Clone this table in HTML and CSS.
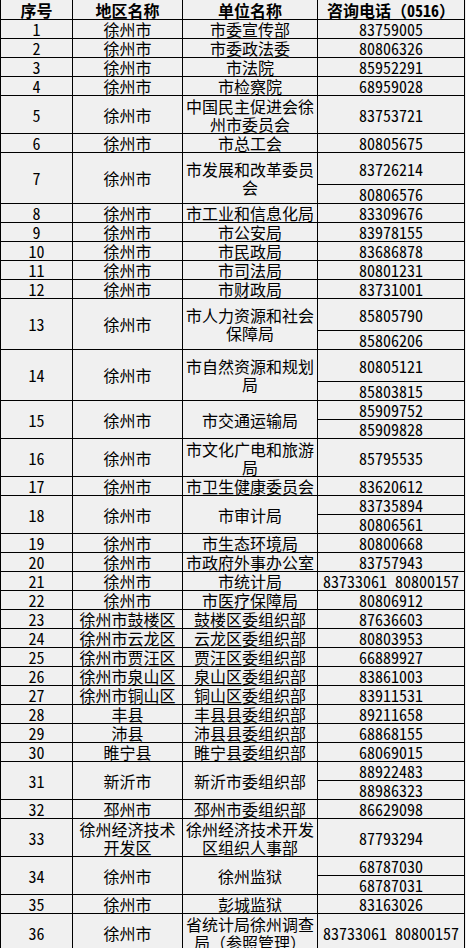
FILE: index.html
```html
<!DOCTYPE html>
<html lang="zh-CN">
<head>
<meta charset="utf-8">
<title>咨询电话</title>
<link rel="stylesheet" href="styles.css">
</head>
<body>
<table class="sheet">
  <colgroup>
    <col class="c-no"><col class="c-area"><col class="c-unit"><col class="c-tel">
  </colgroup>
  <thead>
    <tr class="h20"><th>序号</th><th>地区名称</th><th>单位名称</th><th>咨询电话（0516）</th></tr>
  </thead>
  <tbody>
    <tr class="h19"><td>1</td><td>徐州市</td><td>市委宣传部</td><td>83759005</td></tr>
    <tr class="h19"><td>2</td><td>徐州市</td><td>市委政法委</td><td>80806326</td></tr>
    <tr class="h19"><td>3</td><td>徐州市</td><td>市法院</td><td>85952291</td></tr>
    <tr class="h19"><td>4</td><td>徐州市</td><td>市检察院</td><td>68959028</td></tr>
    <tr class="h38"><td>5</td><td>徐州市</td><td>中国民主促进会徐州市委员会</td><td>83753721</td></tr>
    <tr class="h19"><td>6</td><td>徐州市</td><td>市总工会</td><td>80805675</td></tr>
    <tr class="h32"><td rowspan="2">7</td><td rowspan="2">徐州市</td><td rowspan="2">市发展和改革委员会</td><td>83726214</td></tr>
    <tr class="h19"><td>80806576</td></tr>
    <tr class="h19"><td>8</td><td>徐州市</td><td>市工业和信息化局</td><td>83309676</td></tr>
    <tr class="h19"><td>9</td><td>徐州市</td><td>市公安局</td><td>83978155</td></tr>
    <tr class="h19"><td>10</td><td>徐州市</td><td>市民政局</td><td>83686878</td></tr>
    <tr class="h19"><td>11</td><td>徐州市</td><td>市司法局</td><td>80801231</td></tr>
    <tr class="h19"><td>12</td><td>徐州市</td><td>市财政局</td><td>83731001</td></tr>
    <tr class="h32"><td rowspan="2">13</td><td rowspan="2">徐州市</td><td rowspan="2">市人力资源和社会保障局</td><td>85805790</td></tr>
    <tr class="h19"><td>85806206</td></tr>
    <tr class="h32"><td rowspan="2">14</td><td rowspan="2">徐州市</td><td rowspan="2">市自然资源和规划局</td><td>80805121</td></tr>
    <tr class="h19"><td>85803815</td></tr>
    <tr class="h18"><td rowspan="2">15</td><td rowspan="2">徐州市</td><td rowspan="2">市交通运输局</td><td>85909752</td></tr>
    <tr class="h19"><td>85909828</td></tr>
    <tr class="h38"><td>16</td><td>徐州市</td><td>市文化广电和旅游局</td><td>85795535</td></tr>
    <tr class="h19"><td>17</td><td>徐州市</td><td>市卫生健康委员会</td><td>83620612</td></tr>
    <tr class="h18"><td rowspan="2">18</td><td rowspan="2">徐州市</td><td rowspan="2">市审计局</td><td>83735894</td></tr>
    <tr class="h19"><td>80806561</td></tr>
    <tr class="h19"><td>19</td><td>徐州市</td><td>市生态环境局</td><td>80800668</td></tr>
    <tr class="h19"><td>20</td><td>徐州市</td><td>市政府外事办公室</td><td>83757943</td></tr>
    <tr class="h19"><td>21</td><td>徐州市</td><td>市统计局</td><td>83733061 80800157</td></tr>
    <tr class="h19"><td>22</td><td>徐州市</td><td>市医疗保障局</td><td>80806912</td></tr>
    <tr class="h19"><td>23</td><td>徐州市鼓楼区</td><td>鼓楼区委组织部</td><td>87636603</td></tr>
    <tr class="h19"><td>24</td><td>徐州市云龙区</td><td>云龙区委组织部</td><td>80803953</td></tr>
    <tr class="h19"><td>25</td><td>徐州市贾汪区</td><td>贾汪区委组织部</td><td>66889927</td></tr>
    <tr class="h19"><td>26</td><td>徐州市泉山区</td><td>泉山区委组织部</td><td>83861003</td></tr>
    <tr class="h19"><td>27</td><td>徐州市铜山区</td><td>铜山区委组织部</td><td>83911531</td></tr>
    <tr class="h19"><td>28</td><td>丰县</td><td>丰县县委组织部</td><td>89211658</td></tr>
    <tr class="h19"><td>29</td><td>沛县</td><td>沛县县委组织部</td><td>68868155</td></tr>
    <tr class="h19"><td>30</td><td>睢宁县</td><td>睢宁县委组织部</td><td>68069015</td></tr>
    <tr class="h18"><td rowspan="2">31</td><td rowspan="2">新沂市</td><td rowspan="2">新沂市委组织部</td><td>88922483</td></tr>
    <tr class="h19"><td>88986323</td></tr>
    <tr class="h19"><td>32</td><td>邳州市</td><td>邳州市委组织部</td><td>86629098</td></tr>
    <tr class="h38"><td>33</td><td>徐州经济技术开发区</td><td>徐州经济技术开发区组织人事部</td><td>87793294</td></tr>
    <tr class="h18"><td rowspan="2">34</td><td rowspan="2">徐州市</td><td rowspan="2">徐州监狱</td><td>68787030</td></tr>
    <tr class="h19"><td>68787031</td></tr>
    <tr class="h19"><td>35</td><td>徐州市</td><td>彭城监狱</td><td>83163026</td></tr>
    <tr class="h38"><td>36</td><td>徐州市</td><td>省统计局徐州调查局（参照管理）</td><td>83733061 80800157</td></tr>
  </tbody>
</table>
</body>
</html>
```

FILE: styles.css
```css
html, body {
  margin: 0;
  padding: 0;
  background: #f0f0f0;
}

body {
  font-family: "Noto Sans Mono CJK SC", "Noto Sans CJK SC", sans-serif;
  font-size: 16px;
  color: #000;
}

.sheet {
  border-collapse: separate;
  border-spacing: 0;
  table-layout: fixed;
  width: 465px;
  border-left: 1px solid #000;
}

.c-no { width: 72px; }
.c-area { width: 110px; }
.c-unit { width: 135px; }
.c-tel { width: 147px; }

.sheet th,
.sheet td {
  padding: 0;
  border-right: 1px solid #000;
  border-bottom: 1px solid #000;
  text-align: center;
  vertical-align: middle;
  line-height: 18px;
  font-weight: 400;
}

.sheet th {
  font-weight: 700;
  white-space: nowrap;
}

.sheet td:last-child {
  white-space: nowrap;
}

.h18 { height: 18px; }
.h19 { height: 19px; }
.h20 { height: 20px; }
.h32 { height: 32px; }
.h38 { height: 38px; }
```
